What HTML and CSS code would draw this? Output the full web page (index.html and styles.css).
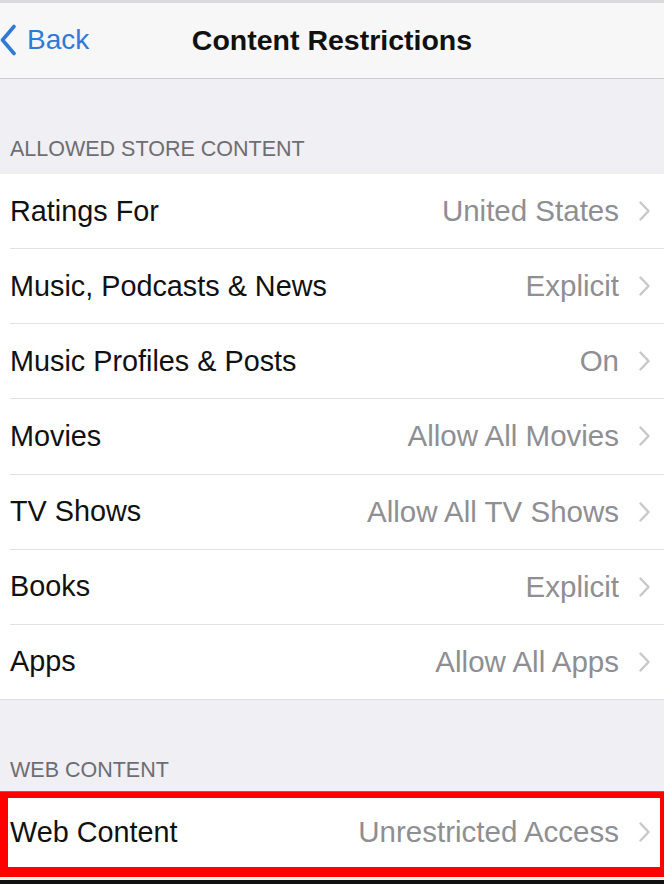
FILE: index.html
```html
<!DOCTYPE html>
<html>
<head>
	<title>Content Restrictions</title>
	<meta charset="UTF-8">
	<meta name="viewport" content="width=device-width, initial-scale=1.0">
	<link rel="stylesheet" href="styles.css">
</head>
<body>
	<div class="topline"></div>
	<header class="navbar">
		<a class="back" href="#">
			<svg class="back-icon" width="17" height="32" viewBox="0 0 17 32">
				<polyline points="14,2.5 2.5,16 14,29.5" fill="none" stroke="#2f7bd3" stroke-width="3.6" stroke-linecap="round" stroke-linejoin="round"/>
			</svg>
			<span>Back</span>
		</a>
		<h1 class="title">Content Restrictions</h1>
		<div></div>
	</header>

	<div class="section-header first">ALLOWED STORE CONTENT</div>
	<div class="group">
		<div class="row"><span class="label">Ratings For</span><span class="value">United States</span><svg class="chevron" width="11" height="20" viewBox="0 0 11 20"><polyline points="1.5,1.5 9.5,10 1.5,18.5" fill="none" stroke="#c7c7cc" stroke-width="2.4" stroke-linecap="round" stroke-linejoin="round"/></svg></div>
		<div class="row"><span class="label">Music, Podcasts &amp; News</span><span class="value">Explicit</span><svg class="chevron" width="11" height="20" viewBox="0 0 11 20"><polyline points="1.5,1.5 9.5,10 1.5,18.5" fill="none" stroke="#c7c7cc" stroke-width="2.4" stroke-linecap="round" stroke-linejoin="round"/></svg></div>
		<div class="row"><span class="label">Music Profiles &amp; Posts</span><span class="value">On</span><svg class="chevron" width="11" height="20" viewBox="0 0 11 20"><polyline points="1.5,1.5 9.5,10 1.5,18.5" fill="none" stroke="#c7c7cc" stroke-width="2.4" stroke-linecap="round" stroke-linejoin="round"/></svg></div>
		<div class="row"><span class="label">Movies</span><span class="value">Allow All Movies</span><svg class="chevron" width="11" height="20" viewBox="0 0 11 20"><polyline points="1.5,1.5 9.5,10 1.5,18.5" fill="none" stroke="#c7c7cc" stroke-width="2.4" stroke-linecap="round" stroke-linejoin="round"/></svg></div>
		<div class="row"><span class="label">TV Shows</span><span class="value">Allow All TV Shows</span><svg class="chevron" width="11" height="20" viewBox="0 0 11 20"><polyline points="1.5,1.5 9.5,10 1.5,18.5" fill="none" stroke="#c7c7cc" stroke-width="2.4" stroke-linecap="round" stroke-linejoin="round"/></svg></div>
		<div class="row"><span class="label">Books</span><span class="value">Explicit</span><svg class="chevron" width="11" height="20" viewBox="0 0 11 20"><polyline points="1.5,1.5 9.5,10 1.5,18.5" fill="none" stroke="#c7c7cc" stroke-width="2.4" stroke-linecap="round" stroke-linejoin="round"/></svg></div>
		<div class="row"><span class="label">Apps</span><span class="value">Allow All Apps</span><svg class="chevron" width="11" height="20" viewBox="0 0 11 20"><polyline points="1.5,1.5 9.5,10 1.5,18.5" fill="none" stroke="#c7c7cc" stroke-width="2.4" stroke-linecap="round" stroke-linejoin="round"/></svg></div>
	</div>

	<div class="section-header second">WEB CONTENT</div>
	<div class="group web">
		<div class="row highlight"><span class="label">Web Content</span><span class="value">Unrestricted Access</span><svg class="chevron" width="11" height="20" viewBox="0 0 11 20"><polyline points="1.5,1.5 9.5,10 1.5,18.5" fill="none" stroke="#c7c7cc" stroke-width="2.4" stroke-linecap="round" stroke-linejoin="round"/></svg></div>
	</div>
	<div class="bottom"></div>
</body>
</html>
```

FILE: styles.css
```css
body {
	margin: 0;
	background-color: #efeff4;
	font-family: "Liberation Sans", Arial, sans-serif;
	color: #111;
}

.topline {
	height: 3px;
	background-color: #dadade;
}

.navbar {
	height: 75px;
	background-color: #f7f7f8;
	border-bottom: 1px solid #cfcfd3;
	display: grid;
	grid-template-columns: 1fr auto 1fr;
	align-items: center;
}

.back {
	display: flex;
	align-items: center;
	gap: 10px;
	color: #2f7bd3;
	text-decoration: none;
	font-size: 28px;
	margin-top: -1px;
}

.back-icon {
	display: block;
}

.title {
	margin: 0;
	font-size: 28.5px;
	font-weight: bold;
	color: #111;
}

.section-header {
	display: flex;
	align-items: flex-end;
	padding: 0 10px;
	font-size: 21.5px;
	color: #6d6d72;
	box-sizing: border-box;
}

.section-header.first {
	height: 95px;
	padding-bottom: 12px;
}

.section-header.second {
	height: 92px;
	padding-bottom: 9px;
}

.group {
	background-color: #fff;
	border-bottom: 1px solid #dcdce0;
}

.row {
	display: flex;
	align-items: center;
	height: 74.15px;
	margin-left: 10px;
	padding-right: 14px;
	border-bottom: 1px solid #e2e2e6;
	font-size: 28.8px;
}

.row:last-child {
	border-bottom: none;
}

.label {
	flex: 1;
	white-space: nowrap;
}

.value {
	color: #8e8e93;
	white-space: nowrap;
	font-size: 29.5px;
	margin-right: 20px;
}

.chevron {
	display: block;
}

.group.web {
	border-bottom: none;
	box-shadow: 0 -1px 0 #6c62d4;
}

.row.highlight {
	margin-left: 0;
	height: 69px;
	border: solid #ff0000;
	border-width: 6px 4px 10px 8px;
	padding-left: 2px;
	padding-right: 10px;
}

.bottom {
	height: 3px;
	border-bottom: 4px solid #111;
}
```
